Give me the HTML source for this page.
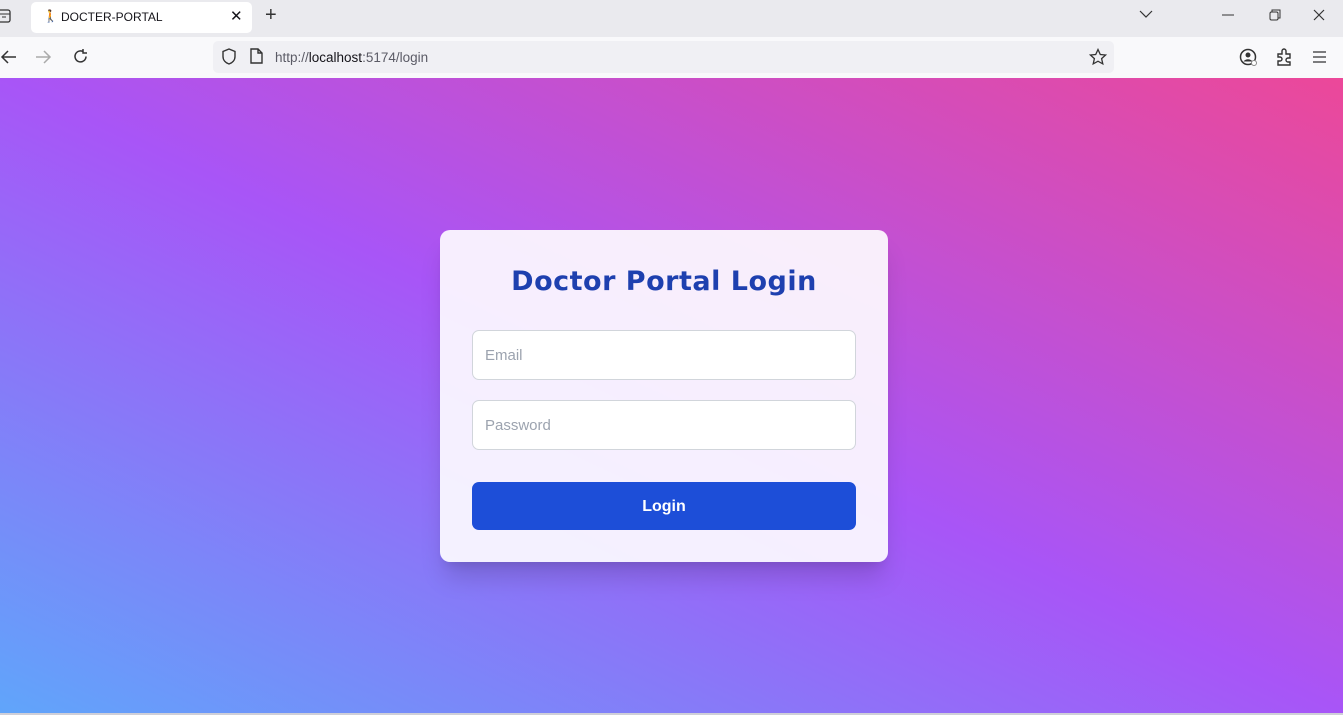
<!DOCTYPE html>
<html><head><style>
*{margin:0;padding:0;box-sizing:border-box}
body{width:1343px;height:715px;overflow:hidden;font-family:"Liberation Sans",sans-serif;background:#fff;position:relative}
.tabs{position:absolute;top:0;left:0;width:1343px;height:37px;background:#eaeaee}
.tab{position:absolute;left:31px;top:2px;width:221px;height:31px;background:#fff;border-radius:5px;font-size:12px;color:#15141a}
.nav{position:absolute;top:37px;left:0;width:1343px;height:41px;background:#f9f9fb}
.url{position:absolute;left:213px;top:4px;width:901px;height:32px;background:#f0f0f4;border-radius:5px;font-size:13.5px;color:#5b5b66}
.page{position:absolute;top:78px;left:0;width:1343px;height:635px;background:linear-gradient(to top right,#60a5fa 0%,#a855f7 50%,#ec4899 100%)}
.bot{position:absolute;top:713px;left:0;width:1343px;height:2px;background:#cfcfd8}
.card{position:absolute;left:440px;top:152px;width:448px;height:332px;background:rgba(255,255,255,.9);border-radius:10px;box-shadow:0 20px 25px -5px rgba(0,0,0,.15),0 8px 10px -6px rgba(0,0,0,.1)}
h1{position:absolute;top:36px;width:100%;text-align:center;font-size:27px;color:#1e40af;font-family:"DejaVu Sans",sans-serif;font-weight:bold;letter-spacing:0.5px}
.in{position:absolute;left:32px;width:384px;height:50px;background:#fff;border:1px solid #d1d5db;border-radius:7px;font-size:15px;color:#9ca3af;padding:16px 12px}
.btn{position:absolute;left:32px;top:252px;width:384px;height:48px;background:#1d4ed8;border-radius:7px;color:#fff;font-weight:bold;font-size:16px;text-align:center;line-height:50px}
svg{position:absolute}
</style></head><body>
<div class="tabs">
<svg style="left:0;top:9px" width="12" height="14"><rect x="-4" y="1" width="14" height="12" rx="2" fill="none" stroke="#333" stroke-width="1.3"/><line x1="-4" y1="5" x2="10" y2="5" stroke="#333"/><line x1="2" y1="8" x2="6" y2="8" stroke="#333"/></svg>
<div class="tab"><span style="position:absolute;left:12px;top:7px;font-size:12px">🚶</span><span style="position:absolute;left:30px;top:8px">DOCTER-PORTAL</span><span style="position:absolute;left:199px;top:5px;font-size:15px">✕</span></div>
<span style="position:absolute;left:265px;top:4px;font-size:20px;color:#333">+</span>
<svg style="left:1139px;top:9px" width="14" height="10"><path d="M1 2l6 6 6-6" fill="none" stroke="#333" stroke-width="1.2"/></svg>
<svg style="left:1222px;top:14px" width="12" height="2"><line x1="0" y1="1" x2="12" y2="1" stroke="#333"/></svg>
<svg style="left:1269px;top:9px" width="12" height="12"><rect x="1" y="3" width="8" height="8" rx="1.5" fill="none" stroke="#333"/><path d="M3 3V1h8v8H9" fill="none" stroke="#333"/></svg>
<svg style="left:1313px;top:9px" width="12" height="12"><path d="M1 1l10 10M11 1L1 11" stroke="#333" stroke-width="1.2"/></svg>
</div>
<div class="nav">
<svg style="left:0;top:12px" width="18" height="16"><path d="M16 8H2M8 2L2 8l6 6" fill="none" stroke="#333" stroke-width="1.5"/></svg>
<svg style="left:35px;top:12px" width="18" height="16"><path d="M1 8h14M9 2l6 6-6 6" fill="none" stroke="#aaa" stroke-width="1.5"/></svg>
<svg style="left:72px;top:11px" width="17" height="17"><path d="M14 8.5A5.5 5.5 0 1 1 11.5 3.8M11 1v4h4" fill="none" stroke="#333" stroke-width="1.5"/></svg>
<div class="url">
<svg style="left:8px;top:7px" width="16" height="18"><path d="M8 1L2 3.5v5c0 4 3 6.5 6 7.5 3-1 6-3.5 6-7.5v-5z" fill="none" stroke="#333" stroke-width="1.4"/></svg>
<svg style="left:37px;top:7px" width="13" height="17"><path d="M1 1h7l4 4v10H1z M8 1v4h4" fill="none" stroke="#333" stroke-width="1.4"/></svg>
<span style="position:absolute;left:62px;top:9px">http://<span style="color:#15141a">localhost</span>:5174/login</span>
<svg style="left:876px;top:7px" width="18" height="18"><path d="M9 1.5l2.3 5 5.3.5-4 3.6 1.2 5.3L9 13.2 4.2 15.9l1.2-5.3-4-3.6 5.3-.5z" fill="none" stroke="#333" stroke-width="1.3"/></svg>
</div>
<svg style="left:1239px;top:11px" width="20" height="20"><circle cx="9" cy="9" r="7.5" fill="none" stroke="#333" stroke-width="1.5"/><circle cx="9" cy="7" r="2.5" fill="#333"/><path d="M4.5 13.5c2-3 7-3 9 0" fill="#333"/><circle cx="15" cy="15" r="2.5" fill="#fff" stroke="#888"/></svg>
<svg style="left:1276px;top:11px" width="17" height="18"><path d="M2 6h4V3a2 2 0 0 1 4 0v3h4v4h-2a2 2 0 0 0 0 4h2v3H2v-4h2a2 2 0 0 0 0-4H2z" fill="none" stroke="#333" stroke-width="1.4"/></svg>
<svg style="left:1313px;top:14px" width="13" height="12"><path d="M0 1h13M0 6h13M0 11h13" stroke="#333" stroke-width="1.3"/></svg>
</div>
<div class="page">
<div class="card">
<h1>Doctor Portal Login</h1>
<div class="in" style="top:100px">Email</div>
<div class="in" style="top:170px">Password</div>
<div class="btn">Login</div>
</div>
</div>
<div class="bot"></div>
</body></html>
